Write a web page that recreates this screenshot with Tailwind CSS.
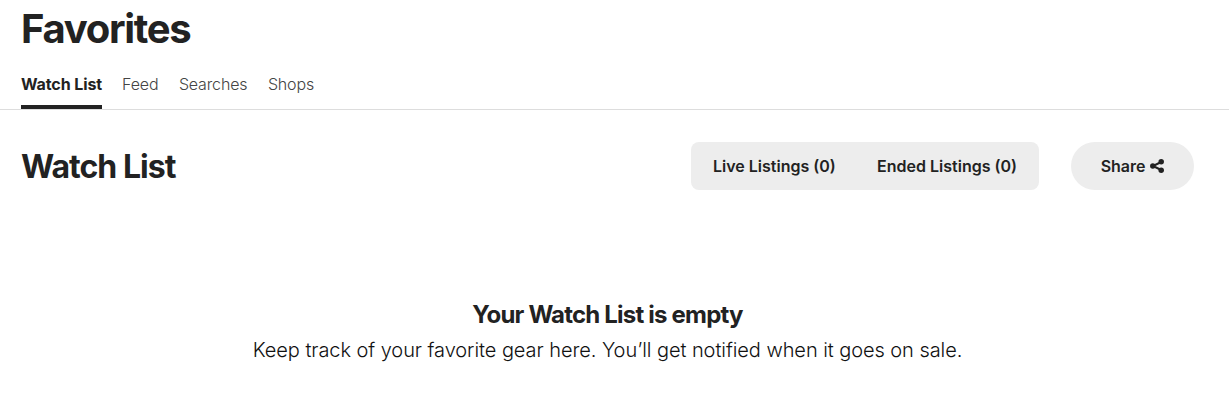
<!DOCTYPE html>
<html lang="en"><head><meta charset="utf-8"><title>Favorites</title>
<script src="https://cdn.jsdelivr.net/npm/@tailwindcss/browser@4"></script></head>
<body class="bg-white font-['Inter',sans-serif] text-[#222] h-[406px] overflow-hidden">
<header class="border-b border-[#ddd] h-[110px] px-[21px] pt-1">
<h1 class="text-[40px] leading-[50px] font-bold tracking-[-1.3px]">Favorites</h1>
<nav class="mt-[14px] flex gap-[20.5px] text-base leading-8 h-[41px] text-[#444] font-light tracking-[-0.15px]">
<a class="border-b-4 border-[#222] font-bold text-[#222] tracking-[-0.1px] w-[81px] -mr-[0.5px] whitespace-nowrap">Watch List</a><a>Feed</a><a>Searches</a><a>Shops</a>
</nav></header>
<main>
<section class="flex items-center pl-[21px] pr-[35px] mt-8 h-12">
<h2 class="text-[32px] leading-10 font-bold tracking-[-0.96px] mr-auto pt-px">Watch List</h2>
<div class="flex items-center w-[348px] h-12 rounded-lg bg-[#ededed] px-[22px] justify-between font-semibold"><span>Live Listings (0)</span><span>Ended Listings (0)</span></div>
<button class="ml-8 w-[123px] h-12 rounded-full bg-[#ededed] font-semibold flex items-center justify-center gap-[5px]"><span class="tracking-[-0.05px]">Share</span>
<svg class="w-[14px] h-[14px] -mt-px" viewBox="0 0 14 14" fill="currentColor"><path d="M11.2 3 3 7l8.2 4" fill="none" stroke="currentColor" stroke-width="2"/><circle cx="11.2" cy="2.8" r="2.75"/><circle cx="2.8" cy="7" r="2.75"/><circle cx="11.2" cy="11.2" r="2.75"/></svg></button>
</section>
<section class="mt-[109px] pr-[14px] text-center">
<h3 class="text-2xl leading-8 font-bold tracking-[-0.8px]">Your Watch List is empty</h3>
<p class="text-xl leading-[30px] mt-1 font-light text-[#111] tracking-[-0.065px]">Keep track of your favorite gear here. You’ll get notified when it goes on sale.</p>
</section></main></body></html>
